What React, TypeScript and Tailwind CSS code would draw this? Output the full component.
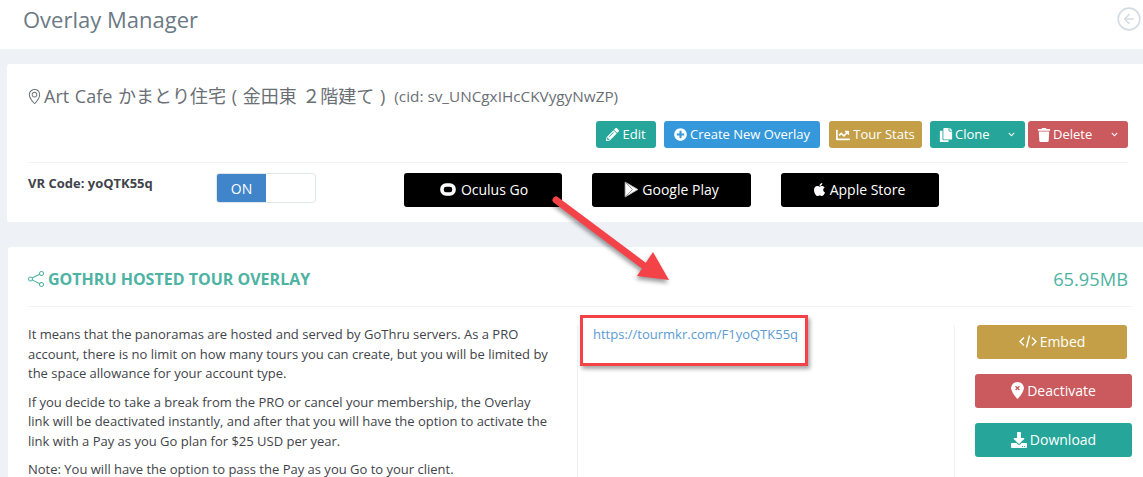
import { ReactNode } from "react";
import { FaApple, FaChartLine, FaChevronDown, FaCopy, FaDownload, FaPencilAlt, FaPlusCircle, FaTrash } from "react-icons/fa";
import { FiArrowLeftCircle } from "react-icons/fi";
import { SlLocationPin, SlShare } from "react-icons/sl";

const Btn = ({ className, children }: { className: string; children: ReactNode }) => (
  <div className={`flex h-[27px] items-center justify-center gap-[3px] rounded-[3px] text-[13px] text-white ${className}`}>{children}</div>
);

const StoreBtn = ({ className, children }: { className: string; children: ReactNode }) => (
  <div className={`flex h-[34px] items-center justify-center gap-[3px] rounded-[3px] bg-black pb-[1px] text-[14px] text-white ${className}`}>{children}</div>
);

const SplitBtn = ({ className, width, children }: { className: string; width: string; children: ReactNode }) => (
  <div className={`flex h-[27px] items-center justify-between rounded-[3px] pl-[9px] pr-[10px] text-[13px] text-white ${className} ${width}`}>
    <span className="flex items-center gap-[2px]">{children}</span>
    <FaChevronDown className="text-[7px]" />
  </div>
);

const SideBtn = ({ className, children }: { className: string; children: ReactNode }) => (
  <div className={`flex h-[34px] items-center justify-center gap-[3px] rounded-[3px] pb-[1px] text-[14px] text-white ${className}`}>{children}</div>
);

const App = () => {
  return (
    <div className="relative h-[477px] w-[1143px] overflow-hidden bg-[#eef1f6] font-['Open_Sans','Noto_Sans_CJK_JP',sans-serif] text-[#3f444a]">
      <header className="flex h-[49px] items-start justify-between bg-white pl-[23px] pr-[1px]">
        <h1 className="mt-[3px] text-[22px] leading-[33px] text-[#6b7a85]">Overlay Manager</h1>
        <FiArrowLeftCircle className="mt-[6px] text-[26px] text-[#d5dce4]" strokeWidth={1.5} />
      </header>

      <section className="ml-[7px] mt-[15px] h-[158px] rounded-l-[3px] bg-white pl-[21px] pr-[15px] pt-[20px]">
        <div className="flex h-[24px] items-center text-[#6a6f75]">
          <SlLocationPin className="ml-[-1px] text-[15px]" />
          <span className="ml-[2px] text-[18px] [word-spacing:1px]">Art Cafe かまとり住宅 ( 金田東 ２階建て )</span>
          <span className="ml-[9px] text-[15.3px]">(cid: sv_UNCgxIHcCKVygyNwZP)</span>
        </div>
        <div className="mt-[13px] flex justify-end">
          <Btn className="w-[60px] bg-[#26a69a]"><FaPencilAlt className="text-[13px]" />Edit</Btn>
          <Btn className="ml-[8px] w-[156px] bg-[#3498db]"><FaPlusCircle className="text-[13px]" />Create New Overlay</Btn>
          <Btn className="ml-[9px] w-[93px] bg-[#c49f47]"><FaChartLine className="text-[14px]" />Tour Stats</Btn>
          <SplitBtn className="ml-[8px] bg-[#26a69a]" width="w-[95px]"><FaCopy className="text-[14px]" />Clone</SplitBtn>
          <SplitBtn className="ml-[3px] bg-[#cb5a5e]" width="w-[100px]"><FaTrash className="text-[14px]" />Delete</SplitBtn>
        </div>
        <div className="mt-[14px] flex border-t border-[#eef1f5] pt-[10px]">
          <div className="w-[189px] text-[13px] font-bold leading-[20px]">VR Code: yoQTK55q</div>
          <div className="ml-[-1px] flex h-[30px] w-[100px] overflow-hidden rounded-[3px] border border-[#e1e5ec]">
            <div className="flex w-[49px] items-center justify-center bg-[#4085c9] text-[14px] text-white">ON</div>
          </div>
          <div className="ml-[88px] flex gap-[30px]">
            <StoreBtn className="w-[158px] gap-[5px] pl-[2px]">
              <svg viewBox="0 0 16 13" className="h-[13px] w-[16px]" aria-hidden="true">
                <rect x="2" y="2" width="12" height="9" rx="4" fill="none" stroke="white" strokeWidth="3.6" />
              </svg>
              Oculus Go
            </StoreBtn>
            <StoreBtn className="w-[159px]">
              <svg viewBox="0 0 14 16" className="h-[17px] w-[15px]" aria-hidden="true">
                <path d="M1 1 L13 8 L1 15 Z" fill="white" stroke="#bbb" strokeWidth="0.8" />
                <path d="M1 1 L8 8 L1 15" fill="none" stroke="#888" strokeWidth="0.8" />
              </svg>
              Google Play
            </StoreBtn>
            <StoreBtn className="w-[158px]"><FaApple className="ml-[-3px] text-[15px]" />Apple Store</StoreBtn>
          </div>
        </div>
      </section>

      <section className="ml-[8px] mt-[25px] h-[240px] rounded-l-[3px] bg-white pl-[20px] pr-[11px]">
        <div className="flex h-[60px] items-center justify-between border-b border-[#eef1f5] pt-[4px]">
          <h2 className="flex items-center gap-[4px] text-[16px] font-bold uppercase text-[#4db3a2]">
            <SlShare className="text-[16px]" />
            GoThru Hosted Tour Overlay
          </h2>
          <span className="mr-[4px] text-[18.3px] text-[#4db3a2]">65.95MB</span>
        </div>
        <div className="mt-[18px] flex">
          <div className="w-[549px] pr-[25px] text-[13px] leading-[19.5px]">
            <p>It means that the panoramas are hosted and served by GoThru servers. As a PRO account, there is no limit on how many tours you can create, but you will be limited by the space allowance for your account type.</p>
            <p className="mt-[9px]">If you decide to take a break from the PRO or cancel your membership, the Overlay link will be deactivated instantly, and after that you will have the option to activate the link with a Pay as you Go plan for $25 USD per year.</p>
            <p className="mt-[9px]">Note: You will have the option to pass the Pay as you Go to your client.</p>
          </div>
          <div className="h-[160px] w-[378px] border-x border-[#eef1f5] pl-[15px] text-[13px] leading-[19.5px] text-[#5b9bd1]">
            https://tourmkr.com/F1yoQTK55q
          </div>
          <div className="ml-[20px] flex w-[157px] flex-col items-end gap-[15px]">
            <SideBtn className="mr-[5px] w-[150px] bg-[#c49f47]">
              <svg viewBox="0 0 18 14" className="h-[15px] w-[18px]" fill="none" stroke="white" strokeWidth="1.4" aria-hidden="true">
                <path d="M5 3 L1 7 L5 11 M13 3 L17 7 L13 11 M10.5 1 L7.5 13" />
              </svg>
              Embed
            </SideBtn>
            <SideBtn className="w-[157px] bg-[#cb5a5e]">
              <svg viewBox="0 0 12 16" className="h-[17px] w-[13px]" aria-hidden="true">
                <path d="M6 0 C2.7 0 0 2.6 0 5.8 C0 9.5 6 16 6 16 C6 16 12 9.5 12 5.8 C12 2.6 9.3 0 6 0 Z" fill="white" />
                <path d="M4.2 4 L7.8 7.6 M7.8 4 L4.2 7.6" stroke="#cb5a5e" strokeWidth="1.3" />
              </svg>
              Deactivate
            </SideBtn>
            <SideBtn className="w-[157px] bg-[#26a69a]"><FaDownload className="text-[16px]" />Download</SideBtn>
          </div>
        </div>
      </section>

      {/* screenshot annotations */}
      <div className="absolute left-[580px] top-[315px] h-[51px] w-[228px] border-[3px] border-[#f44249] shadow-[2px_3px_4px_rgba(0,0,0,0.35)]" />
      <svg className="absolute left-[545px] top-[190px] h-[100px] w-[130px] drop-shadow-[-1px_3px_2px_rgba(0,0,0,0.4)]" viewBox="0 0 130 100" aria-hidden="true">
        <path d="M11 10 L98 75" stroke="#f44249" strokeWidth="7" strokeLinecap="round" />
        <path d="M108 62 L124 90 L92 86 Z" fill="#f44249" />
      </svg>
    </div>
  );
};

export default App;
